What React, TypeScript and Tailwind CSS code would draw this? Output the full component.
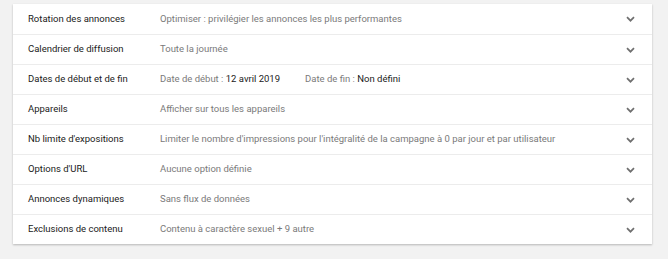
import React from "react";

type Row = {
  label: string;
  value: React.ReactNode;
};

const Chevron = () => (
  <svg width="9" height="6" viewBox="0 0 9 6" className="shrink-0">
    <path d="M1 1.2l3.5 3.5 3.5-3.5" fill="none" stroke="#6f6f6f" strokeWidth="1.7" />
  </svg>
);

const rows: Row[] = [
  {
    label: "Rotation des annonces",
    value: "Optimiser : privilégier les annonces les plus performantes",
  },
  { label: "Calendrier de diffusion", value: "Toute la journée" },
  {
    label: "Dates de début et de fin",
    value: (
      <span className="flex gap-[25px]">
        <span>
          Date de début : <span className="text-[#212121]">12 avril 2019</span>
        </span>
        <span>
          Date de fin : <span className="text-[#212121]">Non défini</span>
        </span>
      </span>
    ),
  },
  { label: "Appareils", value: "Afficher sur tous les appareils" },
  {
    label: "Nb limite d'expositions",
    value:
      "Limiter le nombre d'impressions pour l'intégralité de la campagne à 0 par jour et par utilisateur",
  },
  { label: "Options d'URL", value: "Aucune option définie" },
  { label: "Annonces dynamiques", value: "Sans flux de données" },
  { label: "Exclusions de contenu", value: "Contenu à caractère sexuel + 9 autre" },
];

export default function App() {
  return (
    <div className="w-[668px] h-[259px] bg-[#f2f2f2] pt-[4px] pl-[13px] font-['Roboto',sans-serif]">
      <div className="w-[639px] bg-white shadow-[0_1px_2px_rgba(0,0,0,0.25)]">
        {rows.map((row, i) => (
          <div
            key={row.label}
            className={
              "flex items-center h-[30px] pl-[15px] pr-[17px] text-[9.5px] " +
              (i > 0 ? "border-t border-[#ececec]" : "")
            }
          >
            <div className="w-[132px] shrink-0 text-[#212121]">{row.label}</div>
            <div className="flex-1 text-[#7a7a7a]">{row.value}</div>
            <Chevron />
          </div>
        ))}
      </div>
    </div>
  );
}
